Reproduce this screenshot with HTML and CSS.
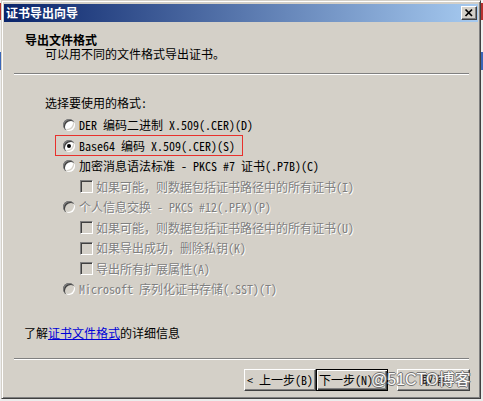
FILE: index.html
```html
<!DOCTYPE html>
<html lang="zh-CN">
<head>
<meta charset="utf-8">
<title>证书导出向导</title>
<link rel="stylesheet" href="styles.css">
</head>
<body>
<div class="window">
  <div class="titlebar">
    <span class="title">证书导出向导</span>
    <span class="close"><svg width="14" height="12" viewBox="0 0 14 12"><path d="M3.5 2.5 L10 9 M10 2.5 L3.5 9" stroke="#000" stroke-width="1.7" fill="none"/></svg></span>
  </div>
  <div class="header">
    <div class="h-title">导出文件格式</div>
    <div class="h-sub">可以用不同的文件格式导出证书。</div>
  </div>
  <div class="sep"></div>
  <div class="prompt">选择要使用的格式:</div>
  <div class="options">
    <div class="row radio-row"><span class="rb"></span><span>DER 编码二进制 X.509(.CER)(D)</span></div>
    <div class="row radio-row marked"><span class="rb checked"></span><span>Base64 编码 X.509(.CER)(S)</span><span class="redbox"></span></div>
    <div class="row radio-row"><span class="rb"></span><span>加密消息语法标准 - PKCS #7 证书(.P7B)(C)</span></div>
    <div class="row check-row disabled"><span class="cb"></span><span>如果可能，则数据包括证书路径中的所有证书(I)</span></div>
    <div class="row radio-row disabled"><span class="rb off"></span><span>个人信息交换 - PKCS #12(.PFX)(P)</span></div>
    <div class="row check-row disabled"><span class="cb"></span><span>如果可能，则数据包括证书路径中的所有证书(U)</span></div>
    <div class="row check-row disabled"><span class="cb"></span><span>如果导出成功，删除私钥(K)</span></div>
    <div class="row check-row disabled"><span class="cb"></span><span>导出所有扩展属性(A)</span></div>
    <div class="row radio-row disabled"><span class="rb off"></span><span>Microsoft 序列化证书存储(.SST)(T)</span></div>
  </div>
  <div class="info">了解<a class="link">证书文件格式</a>的详细信息</div>
  <div class="sep"></div>
  <div class="buttons">
    <span class="btn">&lt; 上一步(B)</span>
    <span class="btn default">下一步(N) &gt;</span>
    <span class="btn cancel">取消</span>
    <span class="watermark">@51CTO博客</span>
  </div>
</div>
</body>
</html>
```
FILE: styles.css
```css
html, body {
  margin: 0;
  padding: 0;
}
body {
  width: 483px;
  height: 401px;
  overflow: hidden;
  background: linear-gradient(to bottom, #f4f4f4 0 3px, #b8312f 3px 20px, #f0f0f0 20px 52px, #3a66b8 52px 70px, #ececec 70px);
  font-family: "Noto Sans Mono CJK SC", "Noto Sans CJK SC", sans-serif;
  font-size: 12px;
  color: #000;
}
.window {
  margin-left: 1px;
  width: 480px;
  height: 399px;
  box-sizing: border-box;
  background: #d4d0c8;
  border-top: 1px solid #d4d0c8;
  border-left: 1px solid #d4d0c8;
  border-right: 1px solid #404040;
  border-bottom: 1px solid #404040;
  box-shadow: inset 1px 1px 0 #fff, inset -1px -1px 0 #808080;
  padding: 3px 2px 2px 2px;
  display: flex;
  flex-direction: column;
}
.titlebar {
  height: 18px;
  background: linear-gradient(to right, #0a246a, #a6caf0);
  display: flex;
  align-items: center;
  justify-content: space-between;
  padding: 0 1px 0 2px;
}
.title {
  color: #fff;
  font-weight: bold;
  line-height: 14px;
}
.close {
  width: 16px;
  height: 14px;
  box-sizing: border-box;
  background: #d4d0c8;
  border-top: 1px solid #fff;
  border-left: 1px solid #fff;
  border-right: 1px solid #404040;
  border-bottom: 1px solid #404040;
  box-shadow: inset -1px -1px 0 #808080;
  display: flex;
  align-items: center;
  justify-content: center;
}
.close svg { display: block; }
.header {
  padding-top: 11px;
  line-height: 14px;
}
.h-title {
  padding-left: 21px;
  font-weight: bold;
}
.h-sub {
  padding-left: 41px;
}
.sep {
  height: 0;
  border-top: 1px solid #808080;
  border-bottom: 1px solid #fff;
  margin: 12px 9px 0 10px;
}
.prompt {
  margin-top: 21px;
  padding-left: 41px;
  line-height: 14px;
}
.options {
  margin-top: 5px;
  display: flex;
  flex-direction: column;
}
.row {
  height: 20.5px;
  display: flex;
  align-items: center;
  line-height: 14px;
  position: relative;
  white-space: nowrap;
}
.radio-row {
  padding-left: 59px;
  gap: 4px;
}
.check-row {
  padding-left: 76px;
  gap: 3px;
}
.disabled {
  color: #808080;
  text-shadow: 1px 1px 0 #fff;
}
.rb {
  width: 12px;
  height: 12px;
  border-radius: 50%;
  background: #fff;
  box-shadow: inset 1px 1px 0 #808080, inset 2px 2px 0 #404040, inset -1px -1px 0 #fff, inset -2px -2px 0 #d4d0c8;
  position: relative;
  flex: none;
}
.rb.off {
  background: #d4d0c8;
}
.rb.checked::after {
  content: "";
  position: absolute;
  left: 4px;
  top: 4px;
  width: 4px;
  height: 4px;
  border-radius: 50%;
  background: #000;
}
.cb {
  width: 13px;
  height: 13px;
  box-sizing: border-box;
  flex: none;
  background: #d4d0c8;
  border-top: 1px solid #808080;
  border-left: 1px solid #808080;
  border-right: 1px solid #fff;
  border-bottom: 1px solid #fff;
  box-shadow: inset 1px 1px 0 #404040, inset -1px -1px 0 #d4d0c8;
}
.redbox {
  position: absolute;
  left: 51px;
  top: -0.5px;
  width: 188px;
  height: 21px;
  box-sizing: border-box;
  border: 1px solid #e8302c;
  pointer-events: none;
}
.info {
  margin-top: 26px;
  padding-left: 20px;
  line-height: 14px;
}
.link {
  color: #0000d8;
  text-decoration: underline;
}
.info + .sep {
  margin-top: 18px;
}
.buttons {
  margin-top: 9px;
  display: flex;
  justify-content: flex-end;
  padding-right: 8px;
  position: relative;
}
.btn {
  width: 72px;
  height: 22px;
  box-sizing: border-box;
  display: flex;
  align-items: center;
  justify-content: center;
  background: #d4d0c8;
  border-top: 1px solid #fff;
  border-left: 1px solid #fff;
  border-right: 1px solid #404040;
  border-bottom: 1px solid #404040;
  box-shadow: inset -1px -1px 0 #808080;
  line-height: 14px;
  white-space: nowrap;
}
.btn.default {
  border: 1px solid #000;
  box-shadow: inset 1px 1px 0 #fff, inset -1px -1px 0 #404040, inset -2px -2px 0 #808080;
}
.btn.cancel {
  margin-left: 9px;
  width: 73px;
}
.watermark {
  position: absolute;
  left: 367px;
  top: 1px;
  font-family: "Liberation Sans", "Noto Sans CJK SC", sans-serif;
  font-size: 16px;
  line-height: 20px;
  color: #fff;
  text-shadow: 1px 0 0 #6a6a6a, -1px 0 0 #6a6a6a, 0 1px 0 #6a6a6a, 0 -1px 0 #6a6a6a;
  opacity: 0.9;
  white-space: nowrap;
}
```
